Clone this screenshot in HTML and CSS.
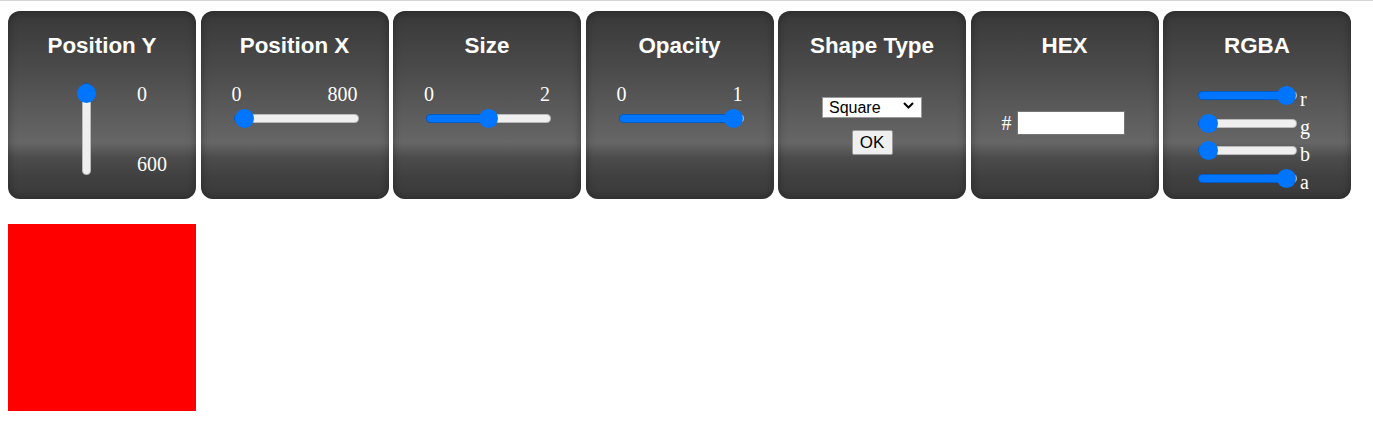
FILE: index.html
```html
<!DOCTYPE html>
<html>
<head>
<meta charset="utf-8">
<title>Shape Controls</title>
<link rel="stylesheet" href="styles.css">
</head>
<body>
<div class="top-rule"></div>
<main class="page">
  <section class="panels">
    <div class="card">
      <h2 class="card-title">Position Y</h2>
      <div class="body body-vertical">
        <div class="vslot">
          <input class="range range-vertical" type="range" min="0" max="600" value="0" style="--p:0">
        </div>
        <div class="vlabels"><span>0</span><span>600</span></div>
      </div>
    </div>
    <div class="card">
      <h2 class="card-title">Position X</h2>
      <div class="body body-h">
        <div class="hlabels"><span>0</span><span>800</span></div>
        <input class="range range-h" type="range" min="0" max="800" value="0" style="--p:0">
      </div>
    </div>
    <div class="card">
      <h2 class="card-title">Size</h2>
      <div class="body body-h">
        <div class="hlabels"><span>0</span><span>2</span></div>
        <input class="range range-h" type="range" min="0" max="2" step="0.01" value="1" style="--p:0.5">
      </div>
    </div>
    <div class="card">
      <h2 class="card-title">Opacity</h2>
      <div class="body body-h">
        <div class="hlabels"><span>0</span><span>1</span></div>
        <input class="range range-h" type="range" min="0" max="1" step="0.01" value="1" style="--p:1">
      </div>
    </div>
    <div class="card">
      <h2 class="card-title">Shape Type</h2>
      <div class="body body-shape">
        <div class="select-wrap">
          <select class="shape-select">
            <option selected>Square</option>
            <option>Circle</option>
            <option>Triangle</option>
          </select>
          <svg class="chevron" width="11" height="7" viewBox="0 0 11 7" aria-hidden="true"><path d="M1 1 L5.5 5.5 L10 1" fill="none" stroke="#000" stroke-width="2"/></svg>
        </div>
        <button class="ok-btn" type="button">OK</button>
      </div>
    </div>
    <div class="card">
      <h2 class="card-title">HEX</h2>
      <div class="body body-hex">
        <span class="hash">#</span>
        <input class="hex-input" type="text" value="">
      </div>
    </div>
    <div class="card">
      <h2 class="card-title">RGBA</h2>
      <div class="body body-rgba">
        <div class="rgba-row"><input class="range range-rgba" type="range" min="0" max="255" value="255" style="--p:1"><span class="ch">r</span></div>
        <div class="rgba-row"><input class="range range-rgba" type="range" min="0" max="255" value="0" style="--p:0"><span class="ch">g</span></div>
        <div class="rgba-row"><input class="range range-rgba" type="range" min="0" max="255" value="0" style="--p:0"><span class="ch">b</span></div>
        <div class="rgba-row"><input class="range range-rgba" type="range" min="0" max="1" step="0.01" value="1" style="--p:1"><span class="ch">a</span></div>
      </div>
    </div>
  </section>
  <div class="shape"></div>
</main>
</body>
</html>
```
FILE: styles.css
```css
html, body {
  margin: 0;
  padding: 0;
  background: #ffffff;
}

.top-rule {
  height: 1px;
  background: #d3d3d3;
}

.page {
  padding: 10px 8px 0 8px;
}

.panels {
  display: flex;
  gap: 4.5px;
}

.card {
  width: 188px;
  height: 188px;
  flex: 0 0 188px;
  box-sizing: border-box;
  border-radius: 12px;
  background: linear-gradient(to bottom, #383838 0%, #4a4a4a 30%, #5c5c5c 55%, #666666 70%, #4c4c4c 78%, #404040 88%, #3a3a3a 100%);
  box-shadow: inset 0 0 8px rgba(0, 0, 0, 0.35);
  padding-top: 22px;
  color: #ffffff;
  font-family: "Liberation Serif", "Times New Roman", serif;
  font-size: 20px;
}

.card-title {
  margin: 0;
  height: 26px;
  line-height: 26px;
  text-align: center;
  font-family: "Liberation Sans", Arial, sans-serif;
  font-weight: bold;
  font-size: 22.4px;
  color: #ffffff;
}

/* custom range */
.range {
  -webkit-appearance: none;
  appearance: none;
  margin: 0;
  padding: 0;
  height: 19px;
  background: transparent;
  --p: 0;
}

.range::-webkit-slider-runnable-track {
  box-sizing: border-box;
  height: 9px;
  border-radius: 5px;
  border: 1px solid rgba(0, 0, 0, 0.22);
  background-origin: border-box;
  background-repeat: no-repeat;
  background-image: linear-gradient(to right, #0075ff calc(9px + var(--p) * (100% - 18px)), #efefef calc(9px + var(--p) * (100% - 18px)));
}

.range::-webkit-slider-thumb {
  -webkit-appearance: none;
  appearance: none;
  width: 19px;
  height: 19px;
  border: none;
  border-radius: 50%;
  background: #0075ff;
  margin-top: -6px;
}

/* Position Y */
.body-vertical {
  display: flex;
  padding: 24px 0 0 69px;
}

.vslot {
  width: 19px;
  height: 92px;
  flex: 0 0 19px;
}

.range-vertical {
  width: 92px;
  transform-origin: 0 0;
  transform: translateX(19px) rotate(90deg);
}

.vlabels {
  height: 92px;
  margin-left: 41px;
  display: flex;
  flex-direction: column;
  justify-content: space-between;
  line-height: 22px;
}

/* horizontal sliders */
.body-h {
  width: 126px;
  margin: 24px auto 0 auto;
  display: flex;
  flex-direction: column;
}

.hlabels {
  display: flex;
  justify-content: space-between;
  line-height: 22px;
}

.range-h {
  width: 125px;
  margin: 4px 0 0 2px;
}

/* Shape type */
.body-shape {
  display: flex;
  flex-direction: column;
  align-items: center;
  padding-top: 36px;
  gap: 14px;
}

.select-wrap {
  position: relative;
  width: 100px;
  height: 21px;
}

.shape-select {
  -webkit-appearance: none;
  appearance: none;
  box-sizing: border-box;
  width: 100px;
  height: 21px;
  border: 1px solid #9a9a9a;
  border-radius: 0;
  background: #ffffff;
  color: #000000;
  font-family: "Liberation Sans", Arial, sans-serif;
  font-size: 16px;
  line-height: 19px;
  padding: 0 0 0 6px;
  margin: 0;
}

.chevron {
  position: absolute;
  right: 8px;
  top: 7px;
  pointer-events: none;
}

.ok-btn {
  box-sizing: border-box;
  width: 41px;
  height: 25px;
  border: 1px solid #9a9a9a;
  border-radius: 2px;
  background: #efefef;
  color: #000000;
  font-family: "Liberation Sans", Arial, sans-serif;
  font-size: 17px;
  padding: 0;
  margin: 0;
}

/* HEX */
.body-hex {
  display: flex;
  align-items: center;
  padding: 52px 0 0 31px;
  gap: 5px;
}

.hash {
  line-height: 24px;
}

.hex-input {
  box-sizing: border-box;
  width: 108px;
  height: 24px;
  margin: 0;
  border: 1px solid #767676;
  background: #ffffff;
  font-family: "Liberation Sans", Arial, sans-serif;
  font-size: 16px;
}

/* RGBA */
.body-rgba {
  display: flex;
  flex-direction: column;
  padding: 27px 0 0 35px;
  gap: 8.5px;
}

.rgba-row {
  display: flex;
  align-items: flex-end;
  height: 19px;
}

.range-rgba {
  width: 99px;
}

.ch {
  margin-left: 3px;
  line-height: 12px;
}

.shape {
  margin-top: 25px;
  width: 188px;
  height: 187px;
  background: #ff0000;
}
```
